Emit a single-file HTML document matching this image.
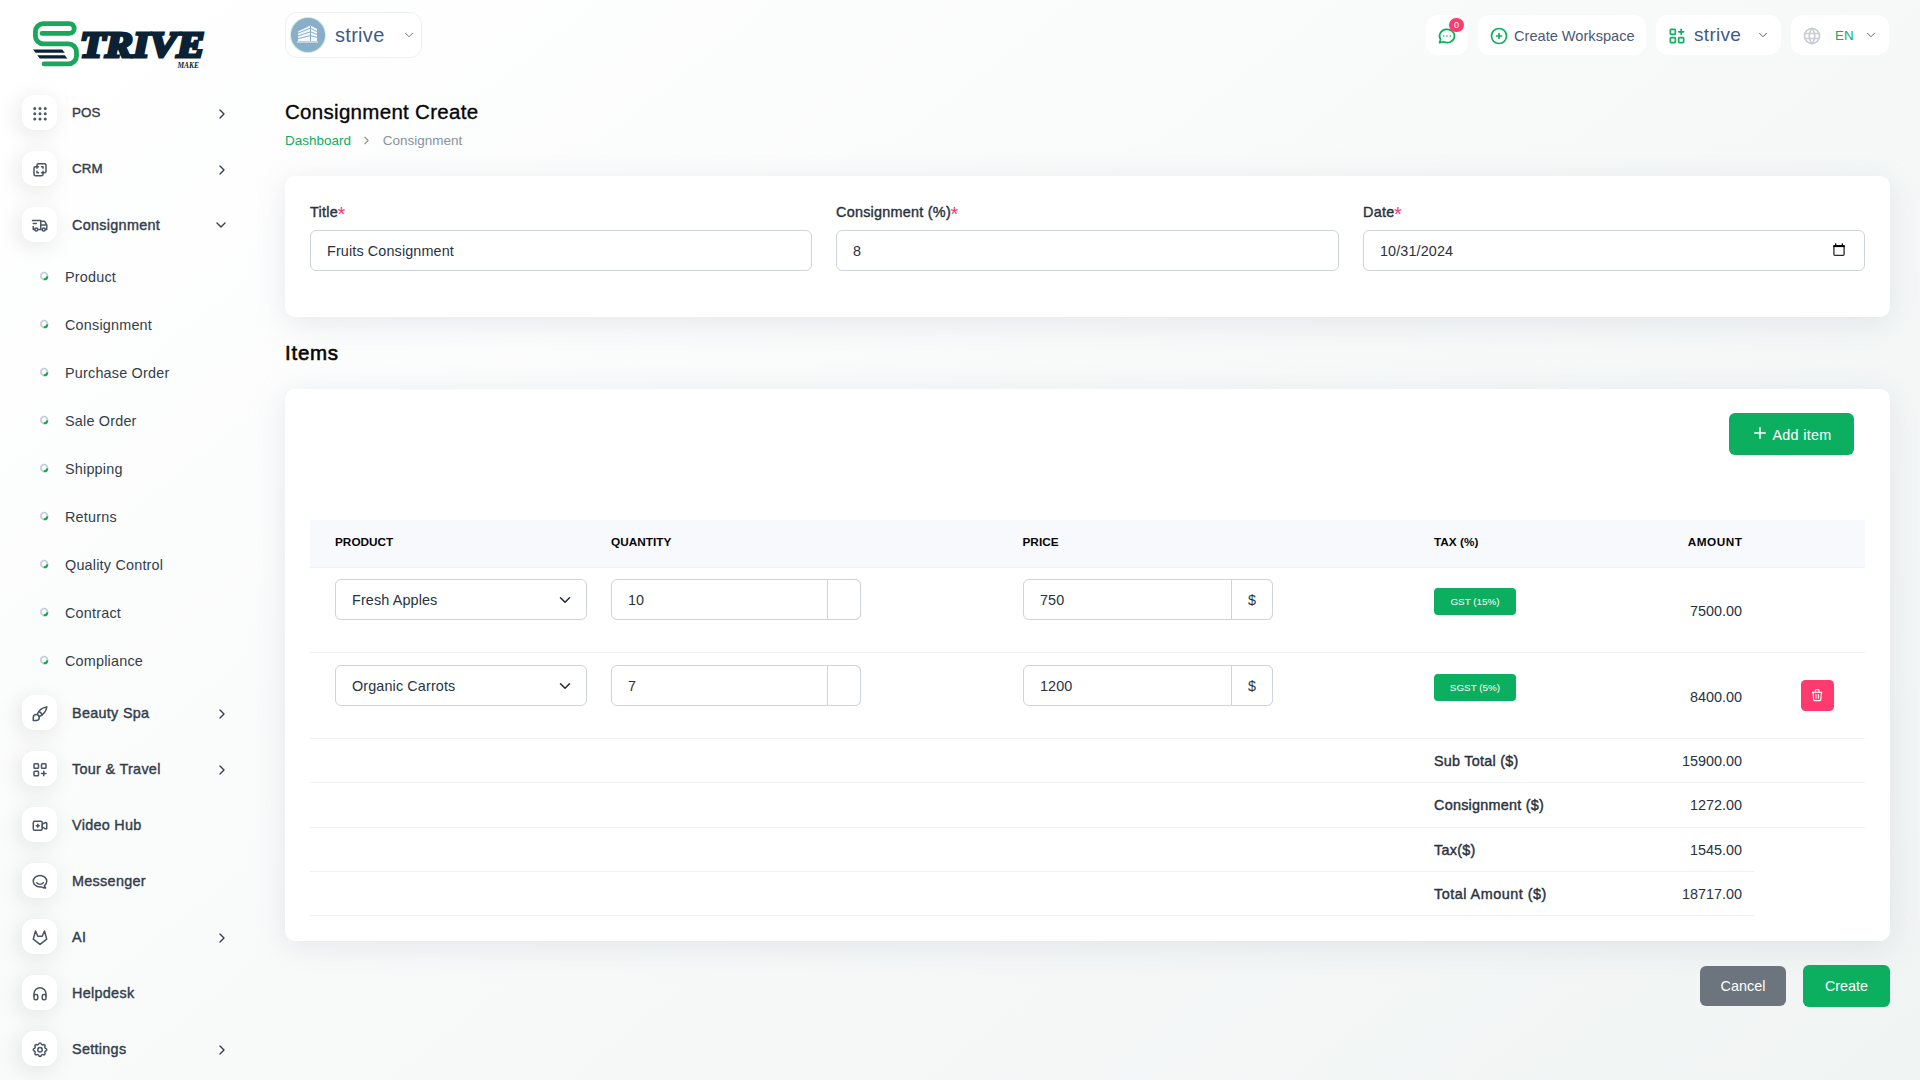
<!DOCTYPE html>
<html lang="en">
<head>
<meta charset="utf-8">
<title>Consignment Create</title>
<style>
*{box-sizing:border-box;margin:0;padding:0}
html,body{width:1920px;height:1080px;overflow:hidden}
body{font-family:"Liberation Sans",sans-serif;font-size:14px;color:#293240;background:#fff linear-gradient(141.55deg,rgba(240,244,243,0) 3.46%,#f0f4f3 99.86%);position:relative;}
.abs{position:absolute}
/* sidebar */
.sidebar{position:absolute;left:0;top:0;width:280px;height:1080px}
.nav{position:absolute;left:0;top:85px;width:280px;list-style:none}
.nav li.m{height:56px;position:relative}
.nav li.s{height:48px;position:relative}
.micon{position:absolute;left:22px;top:10px;width:35px;height:35px;border-radius:12px;background:#fff;box-shadow:-3px 4px 23px rgba(0,0,0,.1);display:flex;align-items:center;justify-content:center}
.micon svg{width:18px;height:18px;transform:translateY(.7px);stroke:#4b5566;fill:none;stroke-width:2;stroke-linecap:round;stroke-linejoin:round}
.mtext{position:absolute;left:72px;top:-.5px;line-height:56px;font-size:14.4px;color:#333d4b;letter-spacing:.3px;-webkit-text-stroke:.4px #333d4b;white-space:nowrap}
.arrow{position:absolute;left:214px;top:21px;width:16px;height:16px}
.arrow.d{left:212.6px;top:19.7px}
.arrow svg{display:block;width:16px;height:16px;stroke:#333d4b;fill:none;stroke-width:2;stroke-linecap:round;stroke-linejoin:round}
.stext{position:absolute;left:65px;top:0;line-height:48px;font-size:14.4px;letter-spacing:.2px;color:#333d4b;white-space:nowrap}
.dot{position:absolute;left:39px;top:18px;width:10px;height:10px}

/* header */
.hbox{position:absolute;top:15px;height:40px;background:#fff;border-radius:12px}
.hbox svg{position:absolute;fill:none;stroke-width:2;stroke-linecap:round;stroke-linejoin:round}
.htext{position:absolute;white-space:nowrap}
.chev{stroke:#5b6472;stroke-width:1.7!important}
/* main */
.card{position:absolute;left:285px;width:1605px;background:#fff;border-radius:10px;box-shadow:0 6px 30px rgba(182,186,203,.3)}
.label{position:absolute;font-size:14.4px;letter-spacing:.25px;-webkit-text-stroke:.4px #293240;color:#293240;white-space:nowrap;line-height:20px}
.label i{color:#ff3a6e;font-style:normal;-webkit-text-stroke:0;letter-spacing:0;font-size:20px;line-height:0;position:relative;top:3.6px;margin-left:-.5px}
.input{position:absolute;height:41px;border:1px solid #ced4da;border-radius:6px;background:#fff;font-size:14.4px;letter-spacing:.12px;line-height:40px;padding-left:16px;color:#293240;white-space:nowrap}
.h4{position:absolute;left:285px;font-size:20.5px;letter-spacing:.3px;-webkit-text-stroke:.35px #060606;color:#060606;white-space:nowrap;line-height:28px}
.btn{position:absolute;border-radius:6px;color:#fff;font-size:14.4px;text-align:center;white-space:nowrap}
.th{position:absolute;top:-.7px;font-size:11.8px;font-weight:bold;color:#060606;line-height:47px;white-space:nowrap}
.hr{position:absolute;left:25px;height:1px;background:#f1f1f1}
.cell{position:absolute;white-space:nowrap;font-size:14.4px;line-height:20px;color:#293240}
.cell.b{letter-spacing:.25px;-webkit-text-stroke:.4px #293240}
.cell.r{text-align:right}
.badge{position:absolute;left:1149px;width:82px;height:27px;border-radius:4px;background:#0caf60;color:#fff;font-size:9.9px;line-height:27px;text-align:center;white-space:nowrap}
.addon{position:absolute;right:-1px;top:-1px;height:41px;border:1px solid #ced4da;border-radius:0 6px 6px 0;background:#fff;text-align:center;line-height:40.5px;font-size:14.4px}
</style>
</head>
<body>
<div class="sidebar" id="sidebar">
<svg class="abs" style="left:0;top:0" width="280" height="85" viewBox="0 0 280 85">
<path d="M42 33.4H69.3A4.9 4.9 0 0 0 69.3 23.6H43.4A8 8 0 0 0 35.4 31.6V35.9A8 8 0 0 0 43.4 43.9H68.5A8 8 0 0 1 76.5 51.9V55.9A8 8 0 0 1 68.5 63.9H44" fill="none" stroke="#1aa75b" stroke-width="4.8" stroke-linecap="round" stroke-linejoin="round"/>
<path d="M33 49.6H62.2L64.8 52.7H35.6Z" fill="#0b2234"/><path d="M37.2 55.3H64.8L67.4 58.4H39.8Z" fill="#0b2234"/>
<text x="80" y="57.1" font-family="'Liberation Serif',serif" font-weight="bold" font-style="italic" font-size="35.3" fill="#0b2234" stroke="#0b2234" stroke-width="3" stroke-linejoin="miter" textLength="124.5" lengthAdjust="spacingAndGlyphs">TRIVE</text>
<text x="177.5" y="67.8" font-family="'Liberation Serif',serif" font-style="italic" font-weight="bold" font-size="7.8" fill="#0b2234" textLength="21.5" lengthAdjust="spacingAndGlyphs">MAKE</text>
</svg>
<ul class="nav">
<li class="m"><span class="micon"><svg viewBox="0 0 24 24"><circle cx="5" cy="5" r="1"/><circle cx="12" cy="5" r="1"/><circle cx="19" cy="5" r="1"/><circle cx="5" cy="12" r="1"/><circle cx="12" cy="12" r="1"/><circle cx="19" cy="12" r="1"/><circle cx="5" cy="19" r="1"/><circle cx="12" cy="19" r="1"/><circle cx="19" cy="19" r="1"/></svg></span><span class="mtext" style="font-size:13.4px;letter-spacing:.1px">POS</span><span class="arrow"><svg viewBox="0 0 24 24"><polyline points="9 18 15 12 9 6"/></svg></span></li>
<li class="m"><span class="micon"><svg viewBox="0 0 24 24"><path d="M16 16v2a2 2 0 0 1 -2 2h-8a2 2 0 0 1 -2 -2v-8a2 2 0 0 1 2 -2h2v-2a2 2 0 0 1 2 -2h8a2 2 0 0 1 2 2v8a2 2 0 0 1 -2 2h-2"/><path d="M10 8l-2 0l0 2"/><path d="M8 14l0 2l2 0"/><path d="M14 8l2 0l0 2"/><path d="M16 14l0 2l-2 0"/></svg></span><span class="mtext" style="font-size:13.4px;letter-spacing:.1px">CRM</span><span class="arrow"><svg viewBox="0 0 24 24"><polyline points="9 18 15 12 9 6"/></svg></span></li>
<li class="m"><span class="micon"><svg viewBox="0 0 24 24"><circle cx="7" cy="17" r="2"/><circle cx="17" cy="17" r="2"/><path d="M5 17h-2v-4m-1 -8h11v12m-4 0h6m4 0h2v-6h-8m0 -5h5l3 5"/><path d="M3 9l4 0"/></svg></span><span class="mtext">Consignment</span><span class="arrow d"><svg viewBox="0 0 24 24"><polyline points="6 9 12 15 18 9"/></svg></span></li>
<li class="s"><svg class="dot" viewBox="0 0 10 10"><circle cx="5.1" cy="5" r="3.3" fill="none" stroke="#c9cfda" stroke-width="1.8"/><path d="M8.38 5.3A3.3 3.3 0 0 1 4.85 8.29" fill="none" stroke="#0aa957" stroke-width="1.9"/></svg><span class="stext">Product</span></li>
<li class="s"><svg class="dot" viewBox="0 0 10 10"><circle cx="5.1" cy="5" r="3.3" fill="none" stroke="#c9cfda" stroke-width="1.8"/><path d="M8.38 5.3A3.3 3.3 0 0 1 4.85 8.29" fill="none" stroke="#0aa957" stroke-width="1.9"/></svg><span class="stext">Consignment</span></li>
<li class="s"><svg class="dot" viewBox="0 0 10 10"><circle cx="5.1" cy="5" r="3.3" fill="none" stroke="#c9cfda" stroke-width="1.8"/><path d="M8.38 5.3A3.3 3.3 0 0 1 4.85 8.29" fill="none" stroke="#0aa957" stroke-width="1.9"/></svg><span class="stext">Purchase Order</span></li>
<li class="s"><svg class="dot" viewBox="0 0 10 10"><circle cx="5.1" cy="5" r="3.3" fill="none" stroke="#c9cfda" stroke-width="1.8"/><path d="M8.38 5.3A3.3 3.3 0 0 1 4.85 8.29" fill="none" stroke="#0aa957" stroke-width="1.9"/></svg><span class="stext">Sale Order</span></li>
<li class="s"><svg class="dot" viewBox="0 0 10 10"><circle cx="5.1" cy="5" r="3.3" fill="none" stroke="#c9cfda" stroke-width="1.8"/><path d="M8.38 5.3A3.3 3.3 0 0 1 4.85 8.29" fill="none" stroke="#0aa957" stroke-width="1.9"/></svg><span class="stext">Shipping</span></li>
<li class="s"><svg class="dot" viewBox="0 0 10 10"><circle cx="5.1" cy="5" r="3.3" fill="none" stroke="#c9cfda" stroke-width="1.8"/><path d="M8.38 5.3A3.3 3.3 0 0 1 4.85 8.29" fill="none" stroke="#0aa957" stroke-width="1.9"/></svg><span class="stext">Returns</span></li>
<li class="s"><svg class="dot" viewBox="0 0 10 10"><circle cx="5.1" cy="5" r="3.3" fill="none" stroke="#c9cfda" stroke-width="1.8"/><path d="M8.38 5.3A3.3 3.3 0 0 1 4.85 8.29" fill="none" stroke="#0aa957" stroke-width="1.9"/></svg><span class="stext">Quality Control</span></li>
<li class="s"><svg class="dot" viewBox="0 0 10 10"><circle cx="5.1" cy="5" r="3.3" fill="none" stroke="#c9cfda" stroke-width="1.8"/><path d="M8.38 5.3A3.3 3.3 0 0 1 4.85 8.29" fill="none" stroke="#0aa957" stroke-width="1.9"/></svg><span class="stext">Contract</span></li>
<li class="s"><svg class="dot" viewBox="0 0 10 10"><circle cx="5.1" cy="5" r="3.3" fill="none" stroke="#c9cfda" stroke-width="1.8"/><path d="M8.38 5.3A3.3 3.3 0 0 1 4.85 8.29" fill="none" stroke="#0aa957" stroke-width="1.9"/></svg><span class="stext">Compliance</span></li>
<li class="m"><span class="micon"><svg viewBox="0 0 24 24"><path d="M3 21v-4a4 4 0 1 1 4 4h-4"/><path d="M21 3a16 16 0 0 0 -12.8 10.2"/><path d="M21 3a16 16 0 0 1 -10.2 12.8"/><path d="M10.6 9a9 9 0 0 1 4.4 4.4"/></svg></span><span class="mtext">Beauty Spa</span><span class="arrow"><svg viewBox="0 0 24 24"><polyline points="9 18 15 12 9 6"/></svg></span></li>
<li class="m"><span class="micon"><svg viewBox="0 0 24 24"><rect x="4" y="4" width="6" height="6" rx="1"/><rect x="14" y="4" width="6" height="6" rx="1"/><rect x="4" y="14" width="6" height="6" rx="1"/><path d="M14 17h6m-3 -3v6"/></svg></span><span class="mtext">Tour &amp; Travel</span><span class="arrow"><svg viewBox="0 0 24 24"><polyline points="9 18 15 12 9 6"/></svg></span></li>
<li class="m"><span class="micon"><svg viewBox="0 0 24 24"><path d="M15 10l4.553 -2.276a1 1 0 0 1 1.447 .894v6.764a1 1 0 0 1 -1.447 .894l-4.553 -2.276v-4z"/><rect x="3" y="6" width="12" height="12" rx="2"/><line x1="7" y1="12" x2="11" y2="12"/><line x1="9" y1="10" x2="9" y2="14"/></svg></span><span class="mtext">Video Hub</span></li>
<li class="m"><span class="micon"><svg viewBox="0 0 24 24"><path d="M17.802 17.292s.077 -.055 .2 -.149c1.843 -1.425 3 -3.49 3 -5.789c0 -4.286 -4.03 -7.764 -9 -7.764c-4.97 0 -9 3.478 -9 7.764c0 4.288 4.03 7.646 9 7.646c.424 0 1.12 -.028 2.088 -.084c1.262 .82 3.104 1.493 4.716 1.493c.499 0 .734 -.41 .414 -.828c-.486 -.596 -1.156 -1.551 -1.416 -2.29z"/><path d="M7.5 13.5c2.5 2.5 6.5 2.5 9 0"/></svg></span><span class="mtext">Messenger</span></li>
<li class="m"><span class="micon"><svg viewBox="0 0 24 24"><path d="M21 14l-9 7l-9 -7l3 -11l3 7h6l3 -7z"/></svg></span><span class="mtext">AI</span><span class="arrow"><svg viewBox="0 0 24 24"><polyline points="9 18 15 12 9 6"/></svg></span></li>
<li class="m"><span class="micon"><svg viewBox="0 0 24 24"><rect x="4" y="13" rx="2" width="5" height="7"/><rect x="15" y="13" rx="2" width="5" height="7"/><path d="M4 15v-3a8 8 0 0 1 16 0v3"/></svg></span><span class="mtext">Helpdesk</span></li>
<li class="m"><span class="micon"><svg viewBox="0 0 24 24"><path d="M10.325 4.317c.426 -1.756 2.924 -1.756 3.35 0a1.724 1.724 0 0 0 2.573 1.066c1.543 -.94 3.31 .826 2.37 2.37a1.724 1.724 0 0 0 1.065 2.572c1.756 .426 1.756 2.924 0 3.35a1.724 1.724 0 0 0 -1.066 2.573c.94 1.543 -.826 3.31 -2.37 2.37a1.724 1.724 0 0 0 -2.572 1.065c-.426 1.756 -2.924 1.756 -3.35 0a1.724 1.724 0 0 0 -2.573 -1.066c-1.543 .94 -3.31 -.826 -2.37 -2.37a1.724 1.724 0 0 0 -1.065 -2.572c-1.756 -.426 -1.756 -2.924 0 -3.35a1.724 1.724 0 0 0 1.066 -2.573c-.94 -1.543 .826 -3.31 2.37 -2.37c1 .608 2.296 .07 2.572 -1.065z"/><circle cx="12" cy="12" r="3"/></svg></span><span class="mtext">Settings</span><span class="arrow"><svg viewBox="0 0 24 24"><polyline points="9 18 15 12 9 6"/></svg></span></li>
</ul>
</div>
<div id="header">
<div class="abs" style="left:285px;top:12px;width:137px;height:46px;border:1px solid #f0f0f0;border-radius:12px;background:#fff">
<div class="abs" style="left:5px;top:5px;width:34px;height:34px;border-radius:50%;background:#8aaeca;overflow:hidden;box-shadow:0 0 0 1px rgba(12,175,96,.22)">
<svg class="abs" style="left:0;top:0" width="34" height="34" viewBox="0 0 34 34"><path d="M7 23V13.5L19.5 7.5L26 11V23Z" fill="#f4f8fb"/><path d="M7 15.2L19.5 10.2L26 13.6M7 17.9L19.5 13.8L26 16.4M7 20.6L19.5 17.6L26 19.4M19.5 7.5V23" stroke="#8aaeca" stroke-width="1" fill="none"/><rect x="6" y="23" width="21" height="2" fill="#bed2e2"/></svg>
</div>
<span class="htext" style="left:49px;top:9px;font-size:20px;letter-spacing:.3px;line-height:26px;color:#3f5b84">strive</span>
<svg class="abs" style="left:116px;top:15.4px;fill:none;stroke:#5f6876;stroke-width:1.6;stroke-linecap:round;stroke-linejoin:round" width="14" height="14" viewBox="0 0 24 24"><polyline points="6 9 12 15 18 9"/></svg>
</div>
<div class="hbox" style="left:1426px;width:42px">
<svg style="left:11px;top:11px;stroke:#0caf60" width="20" height="20" viewBox="0 0 24 24"><path d="M3 20l1.3 -3.9a9 8 0 1 1 3.4 2.9l-4.7 1"/><line x1="12" y1="12" x2="12" y2="12.01"/><line x1="8" y1="12" x2="8" y2="12.01"/><line x1="16" y1="12" x2="16" y2="12.01"/></svg>
<span class="abs" style="left:23px;top:3px;width:15px;height:14px;border-radius:8px;background:#ff3a6e;color:#fff;font-size:9px;line-height:14.6px;text-align:center">0</span>
</div>
<div class="hbox" style="left:1478px;width:168px">
<svg style="left:11px;top:11px;stroke:#0caf60" width="20" height="20" viewBox="0 0 24 24"><circle cx="12" cy="12" r="9"/><line x1="9" y1="12" x2="15" y2="12"/><line x1="12" y1="9" x2="12" y2="15"/></svg>
<span class="htext" style="left:36px;top:1px;line-height:41px;font-size:14.6px;color:#4b5875">Create Workspace</span>
</div>
<div class="hbox" style="left:1656px;width:125px">
<svg style="left:11px;top:11px;stroke:#0caf60" width="20" height="20" viewBox="0 0 24 24"><rect x="4" y="4" width="6" height="6" rx="1"/><rect x="4" y="14" width="6" height="6" rx="1"/><rect x="14" y="14" width="6" height="6" rx="1"/><line x1="14" y1="7" x2="20" y2="7"/><line x1="17" y1="4" x2="17" y2="10"/></svg>
<span class="htext" style="left:38px;top:-.2px;line-height:39px;font-size:19px;letter-spacing:.3px;color:#3f5b84">strive</span>
<svg class="chev" style="left:100px;top:13px" width="14" height="14" viewBox="0 0 24 24"><polyline points="6 9 12 15 18 9"/></svg>
</div>
<div class="hbox" style="left:1791px;width:98px">
<svg style="left:11px;top:11px;stroke:#c9cdd4" width="20" height="20" viewBox="0 0 24 24"><circle cx="12" cy="12" r="9"/><line x1="3.6" y1="9" x2="20.4" y2="9"/><line x1="3.6" y1="15" x2="20.4" y2="15"/><path d="M11.5 3a17 17 0 0 0 0 18"/><path d="M12.5 3a17 17 0 0 1 0 18"/></svg>
<span class="htext" style="left:44px;top:-.3px;line-height:41px;font-size:13.4px;color:#0caf60">EN</span>
<svg class="chev" style="left:73px;top:13px" width="14" height="14" viewBox="0 0 24 24"><polyline points="6 9 12 15 18 9"/></svg>
</div>
</div>
<div id="main">
<div class="h4" style="top:98px">Consignment Create</div>
<div class="abs" style="left:285px;top:131px;line-height:20px;font-size:13.5px;white-space:nowrap"><span style="color:#0caf60">Dashboard</span><svg style="vertical-align:-2px;margin:0 9.8px 0 8.9px" width="13" height="13" viewBox="0 0 24 24" fill="none" stroke="#8a919c" stroke-width="2" stroke-linecap="round" stroke-linejoin="round"><polyline points="9 18 15 12 9 6"/></svg><span style="color:#8a919c">Consignment</span></div>
<div class="card" style="top:176px;height:141px">
<span class="label" style="left:25px;top:26px">Title<i>*</i></span>
<div class="input" style="left:25px;top:54px;width:502px">Fruits Consignment</div>
<span class="label" style="left:551px;top:26px">Consignment (%)<i>*</i></span>
<div class="input" style="left:551px;top:54px;width:503px">8</div>
<span class="label" style="left:1078px;top:26px">Date<i>*</i></span>
<div class="input" style="left:1078px;top:54px;width:502px">10/31/2024<svg class="abs" style="right:19px;top:12px" width="12" height="13" viewBox="0 0 12 13"><rect x=".9" y="2.6" width="10.2" height="9.7" rx="1" fill="none" stroke="#2a2a2a" stroke-width="1.3"/><rect x=".3" y="2.1" width="11.4" height="2" fill="#000"/><rect x="2.1" y=".3" width="1.2" height="2" fill="#000"/><rect x="8.7" y=".3" width="1.2" height="2" fill="#000"/></svg></div>
</div>
<div class="h4" style="top:339px;letter-spacing:.75px;-webkit-text-stroke:.6px #060606">Items</div>
<div class="card" style="top:389px;height:552px">
<div class="btn" style="left:1444px;top:24px;width:125px;height:42px;background:#0caf60;line-height:42px"><svg class="abs" style="left:21.6px;top:11.2px" width="18" height="18" viewBox="0 0 24 24" fill="none" stroke="#fff" stroke-width="2" stroke-linecap="round" stroke-linejoin="round"><line x1="12" y1="5" x2="12" y2="19"/><line x1="5" y1="12" x2="19" y2="12"/></svg><span class="abs" style="left:43.4px;top:1px;letter-spacing:.3px">Add item</span></div>
<div class="abs" style="left:25px;top:131px;width:1555px;height:47px;background:#f8f9fd">
<span class="th" style="left:25px">PRODUCT</span><span class="th" style="left:301px">QUANTITY</span><span class="th" style="left:712.5px">PRICE</span><span class="th" style="left:1124px">TAX (%)</span><span class="th" style="right:123px;letter-spacing:.5px;margin-right:-.5px">AMOUNT</span>
</div>
<div class="hr" style="top:178px;width:1555px"></div>
<div class="input" style="left:50px;top:190px;width:252px">Fresh Apples<svg class="abs" style="right:15.2px;top:13.6px" width="12" height="12" viewBox="0 0 16 16"><path fill="none" stroke="#222831" stroke-linecap="round" stroke-linejoin="round" stroke-width="2" d="M2 5l6 6 6-6"/></svg></div>
<div class="input" style="left:326px;top:190px;width:250px">10<span class="addon" style="width:34px"></span></div>
<div class="input" style="left:738px;top:190px;width:250px">750<span class="addon" style="width:42px">$</span></div>
<span class="badge" style="top:199px">GST (15%)</span>
<span class="cell r" style="right:148px;top:212.2px">7500.00</span>
<div class="hr" style="top:263px;width:1555px"></div>
<div class="input" style="left:50px;top:276px;width:252px">Organic Carrots<svg class="abs" style="right:15.2px;top:13.6px" width="12" height="12" viewBox="0 0 16 16"><path fill="none" stroke="#222831" stroke-linecap="round" stroke-linejoin="round" stroke-width="2" d="M2 5l6 6 6-6"/></svg></div>
<div class="input" style="left:326px;top:276px;width:250px">7<span class="addon" style="width:34px"></span></div>
<div class="input" style="left:738px;top:276px;width:250px">1200<span class="addon" style="width:42px">$</span></div>
<span class="badge" style="top:285px">SGST (5%)</span>
<span class="cell r" style="right:148px;top:297.7px">8400.00</span>
<span class="abs" style="left:1516px;top:291px;width:33px;height:31px;border-radius:4.5px;background:#ff3a6e"><svg class="abs" style="left:9.1px;top:7.9px" width="14.4" height="14.4" viewBox="0 0 24 24" fill="none" stroke="#fff" stroke-width="1.8" stroke-linecap="round" stroke-linejoin="round"><line x1="4" y1="7" x2="20" y2="7"/><line x1="10" y1="11" x2="10" y2="17"/><line x1="14" y1="11" x2="14" y2="17"/><path d="M5 7l1 12a2 2 0 0 0 2 2h8a2 2 0 0 0 2 -2l1 -12"/><path d="M9 7v-3a1 1 0 0 1 1 -1h4a1 1 0 0 1 1 1v3"/></svg></span>
<div class="hr" style="top:349px;width:1555px"></div>
<span class="cell b" style="left:1149px;top:362px">Sub Total ($)</span><span class="cell r" style="right:148px;top:362px">15900.00</span>
<div class="hr" style="top:393px;width:1555px"></div>
<span class="cell b" style="left:1149px;top:406px">Consignment ($)</span><span class="cell r" style="right:148px;top:406px">1272.00</span>
<div class="hr" style="top:438px;width:1555px"></div>
<span class="cell b" style="left:1149px;top:451px">Tax($)</span><span class="cell r" style="right:148px;top:451px">1545.00</span>
<div class="hr" style="top:482px;width:1444px"></div>
<span class="cell b" style="left:1149px;top:495px;letter-spacing:.5px">Total Amount ($)</span><span class="cell r" style="right:148px;top:495px">18717.00</span>
<div class="hr" style="top:526px;width:1444px"></div>
</div>
<div class="btn" style="left:1700px;top:966px;width:86px;height:40px;background:#6c757d;line-height:41.6px">Cancel</div>
<div class="btn" style="left:1803px;top:965px;width:87px;height:42px;background:#0caf60;line-height:43.6px">Create</div>
</div>
</body>
</html>
